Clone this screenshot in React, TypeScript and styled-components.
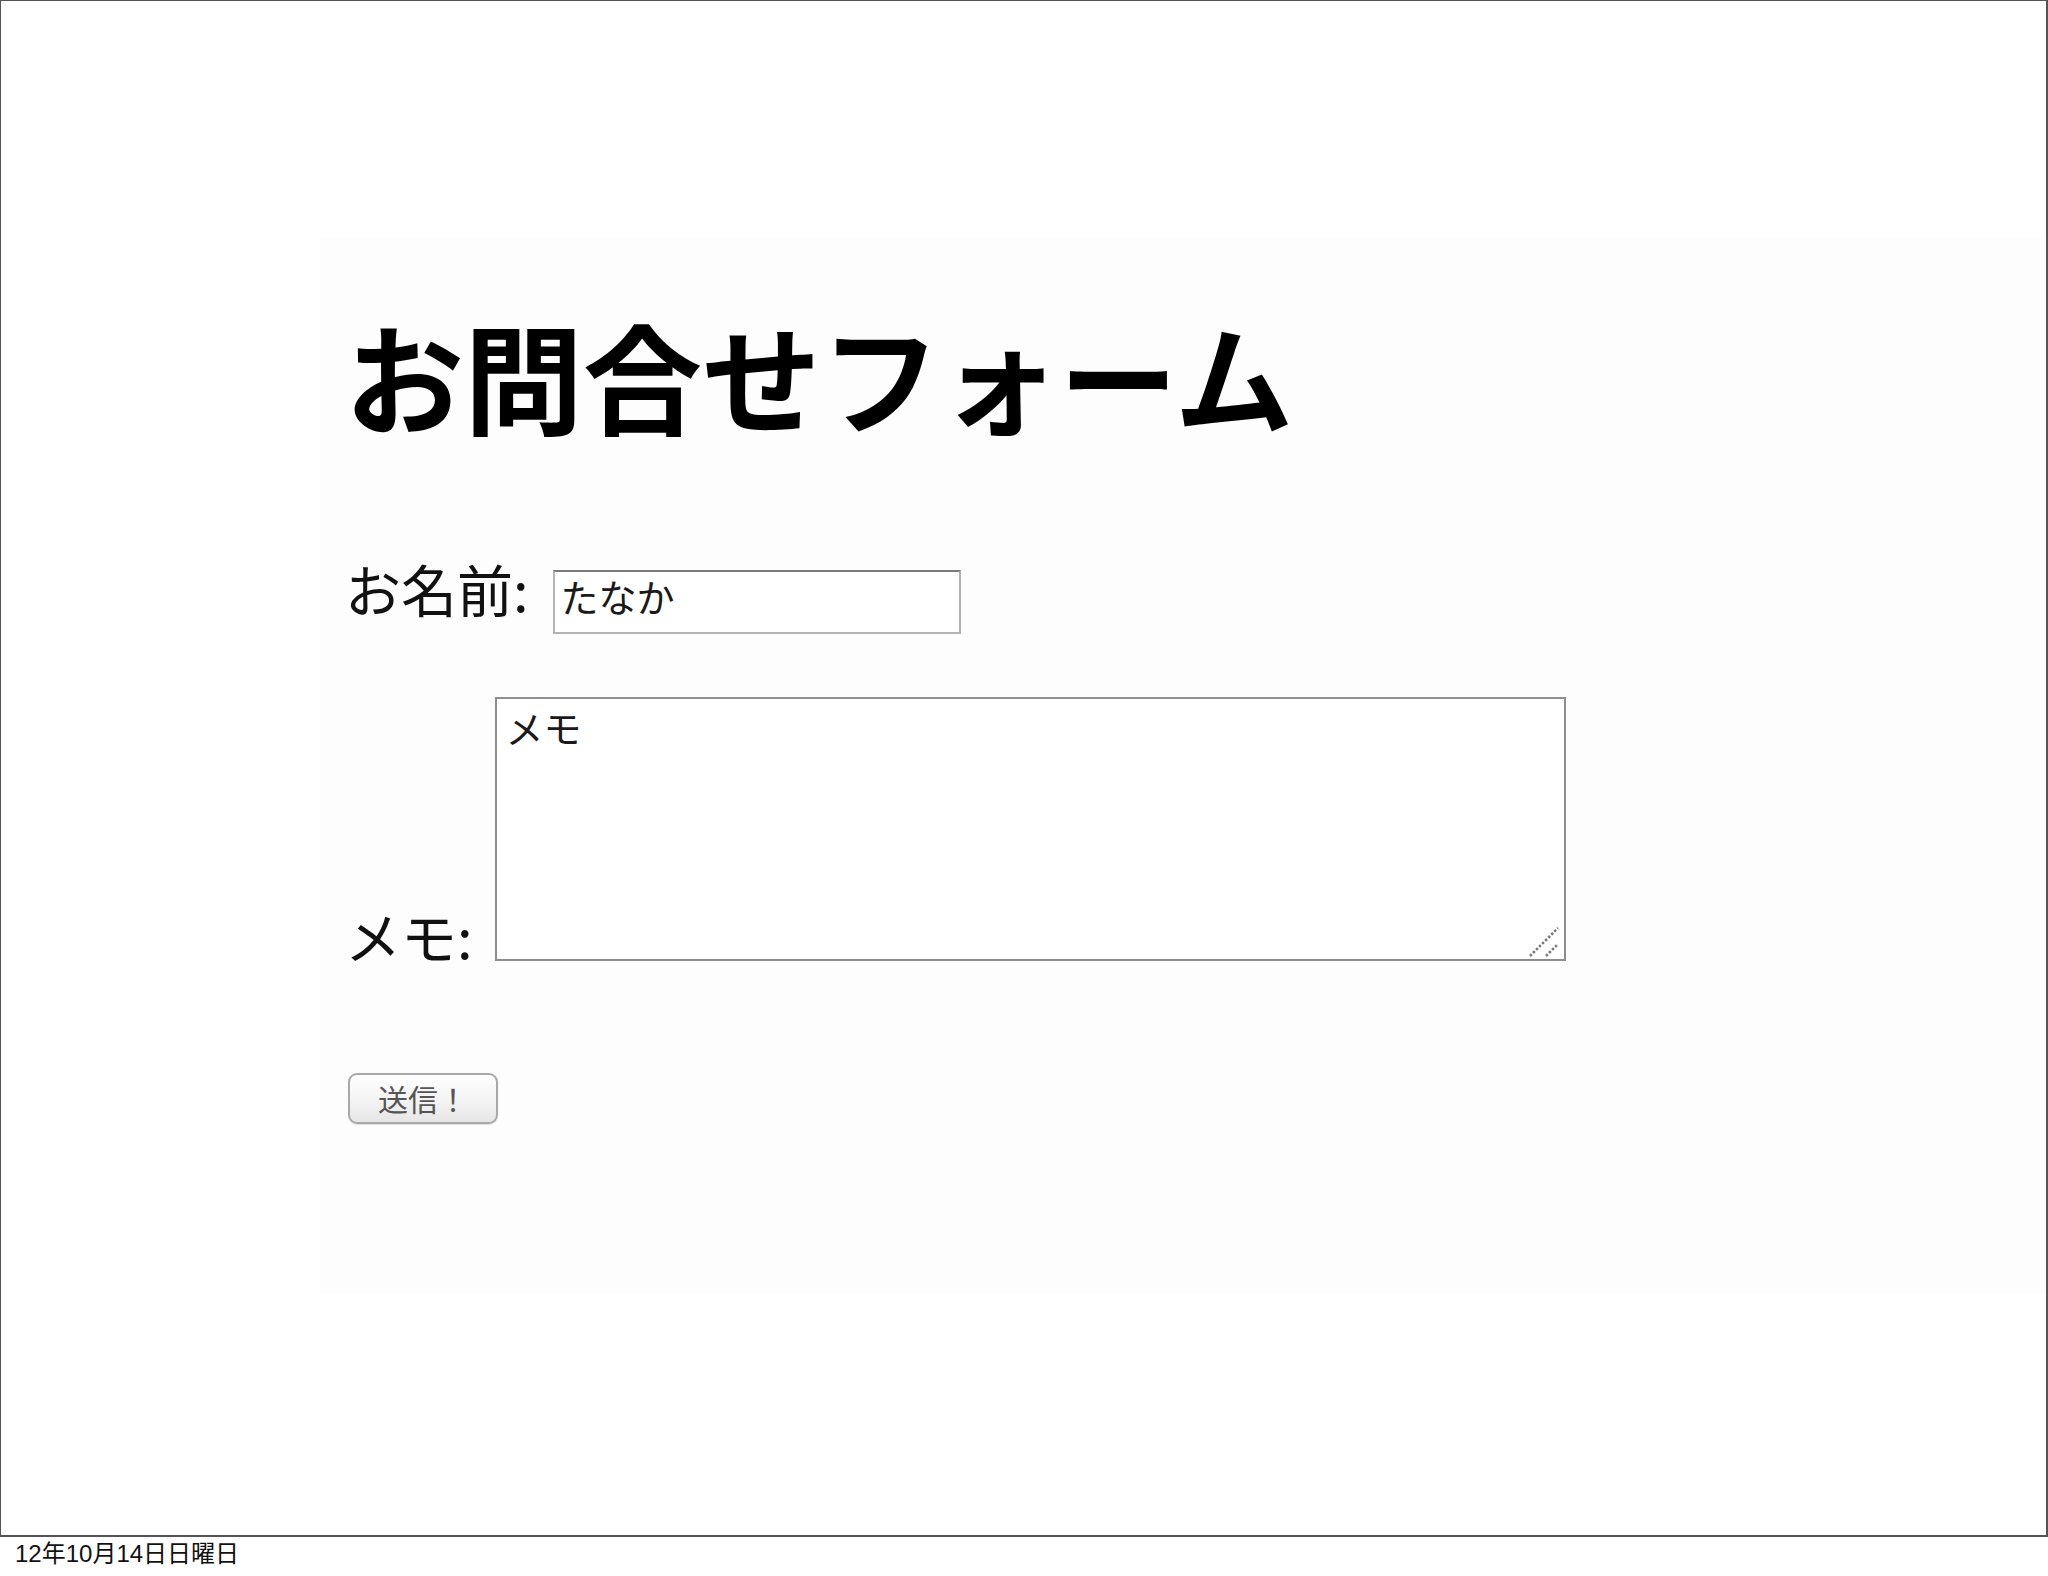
import React from "react";
import styled, { createGlobalStyle } from "styled-components";

const GlobalStyle = createGlobalStyle`
  html, body {
    margin: 0;
    padding: 0;
    background: #ffffff;
  }
  body {
    font-family: "Noto Sans CJK JP", "Noto Sans", sans-serif;
    color: #000;
  }
`;

const jp = `"Noto Sans CJK JP", "Noto Sans", sans-serif`;

const Screen = styled.div`
  width: 2048px;
  height: 1576px;
  display: flex;
  flex-direction: column;
`;

const Slide = styled.div`
  box-sizing: border-box;
  width: 2048px;
  height: 1537px;
  border-style: solid;
  border-color: #555555;
  border-width: 1px 2px 2px 1px;
  padding: 236px 0 0 319px;
  display: flex;
  flex-direction: column;
`;

const Page = styled.div`
  box-sizing: border-box;
  background: #fdfdfd;
  height: 1057px;
  padding: 77px 0 0 25px;
  display: flex;
  flex-direction: column;
`;

const Title = styled.h1`
  margin: 0;
  height: 120px;
  font-family: ${jp};
  font-size: 119px;
  font-weight: 700;
  line-height: 120px;
  color: #000;
  white-space: nowrap;
`;

const Row = styled.div<{ $align: string; $mt: number }>`
  display: flex;
  align-items: ${(p) => p.$align};
  margin-top: ${(p) => p.$mt}px;
`;

const Label = styled.label<{ $gap: number; $mb?: number }>`
  font-family: ${jp};
  font-size: 56px;
  line-height: 56px;
  color: #111;
  margin-right: ${(p) => p.$gap}px;
  margin-bottom: ${(p) => p.$mb ?? 0}px;
  white-space: nowrap;
`;

const TextInput = styled.input`
  box-sizing: border-box;
  width: 408px;
  height: 64px;
  margin: 0;
  padding: 0 6px 12px 6px;
  border: 2px solid #b4b4b4;
  border-top-color: #7c7c7c;
  background: #fff;
  font-family: ${jp};
  font-size: 38px;
  color: #1a1a1a;
  outline: none;
`;

const MemoBox = styled.div`
  position: relative;
  width: 1071px;
  height: 264px;
`;

const MemoArea = styled.textarea`
  box-sizing: border-box;
  width: 100%;
  height: 100%;
  margin: 0;
  display: block;
  padding: 0 9px;
  border: 2px solid #8e8e8e;
  background: #fff;
  font-family: ${jp};
  font-size: 38px;
  line-height: normal;
  color: #1a1a1a;
  resize: none;
  outline: none;
`;

const Grip = styled.svg`
  position: absolute;
  right: 6px;
  bottom: 3px;
  width: 32px;
  height: 32px;
`;

const SubmitButton = styled.button`
  box-sizing: border-box;
  width: 150px;
  height: 51px;
  margin: 112px 0 0 3px;
  padding: 0 0 0 28px;
  align-self: flex-start;
  text-align: left;
  border: 2px solid #a9a9a9;
  border-radius: 9px;
  background: linear-gradient(#ffffff, #f3f3f3 55%, #e6e6e6);
  box-shadow: 0 1px 1px rgba(0, 0, 0, 0.12);
  font-family: ${jp};
  font-size: 30px;
  line-height: 1;
  color: #555;
`;

const Footer = styled.div`
  padding: 3px 0 0 15px;
  font-family: "Liberation Sans", "Noto Sans CJK JP", sans-serif;
  font-size: 24px;
  line-height: 28px;
  color: #111;
`;

export default function App() {
  return (
    <>
      <GlobalStyle />
      <Screen>
        <Slide>
          <Page>
            <Title>お問合せフォーム</Title>
            <Row $align="baseline" $mt={126}>
              <Label $gap={24}>お名前:</Label>
              <TextInput type="text" defaultValue="たなか" readOnly />
            </Row>
            <Row $align="flex-end" $mt={63}>
              <Label $gap={22} $mb={-2}>メモ:</Label>
              <MemoBox>
                <MemoArea defaultValue="メモ" readOnly />
                <Grip viewBox="0 0 32 32">
                  <line x1="2" y1="30" x2="30" y2="2" stroke="#7a7a7a" strokeWidth="2.6" strokeDasharray="2.5 1.8" />
                  <line x1="18" y1="30" x2="30" y2="18" stroke="#7a7a7a" strokeWidth="2.6" strokeDasharray="2.5 1.8" />
                </Grip>
              </MemoBox>
            </Row>
            <SubmitButton type="button">送信！</SubmitButton>
          </Page>
        </Slide>
        <Footer>12年10月14日日曜日</Footer>
      </Screen>
    </>
  );
}
